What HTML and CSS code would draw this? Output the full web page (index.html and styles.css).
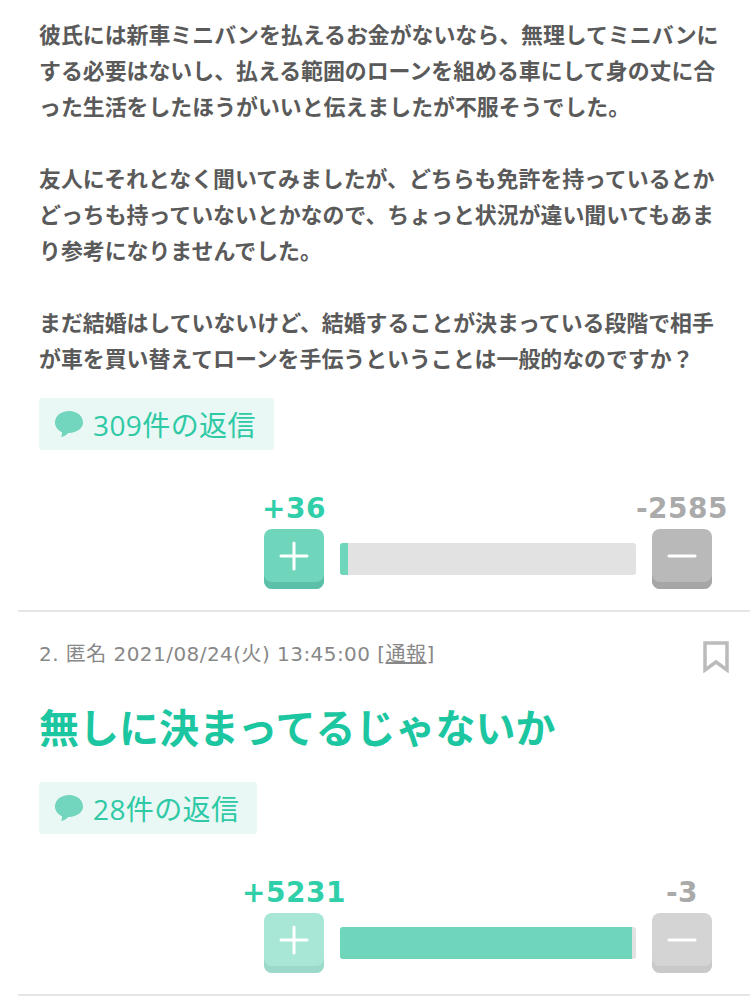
FILE: index.html
```html
<!DOCTYPE html>
<html lang="ja">
<head>
  <meta charset="UTF-8" />
  <title>コメント</title>
  <link rel="stylesheet" href="styles.css">
</head>
<body>

  <!-- Comment 1 -->
  <div class="comment first">
    <p class="body-text">彼氏には新車ミニバンを払えるお金がないなら、無理してミニバンに<br>する必要はないし、払える範囲のローンを組める車にして身の丈に合<br>った生活をしたほうがいいと伝えましたが不服そうでした。<br><br>友人にそれとなく聞いてみましたが、どちらも免許を持っているとか<br>どっちも持っていないとかなので、ちょっと状況が違い聞いてもあま<br>り参考になりませんでした。<br><br>まだ結婚はしていないけど、結婚することが決まっている段階で相手<br>が車を買い替えてローンを手伝うということは一般的なのですか？</p>

    <div class="replies">
      <svg class="bubble" viewBox="0 0 28 28"><path d="M14 1C6 1 0 6 0 12.500c0 4.500 3 8 7 9.700.2 1.600-.2 3.300-1 4.800 2.800-.4 5.400-2 7.200-4.100h.8c8 0 14-4.700 14-10.400C28 6 22 1 14 1z"/></svg>
      <span>309件の返信</span>
    </div>

    <div class="votes">
      <div class="vote-col">
        <div class="count plus">+36</div>
        <div class="btn btn-plus">
          <svg viewBox="0 0 30 30"><path d="M15 2v26M2 15h26"/></svg>
        </div>
      </div>
      <div class="bar"><div class="bar-fill" style="width:8px"></div></div>
      <div class="vote-col">
        <div class="count minus">-2585</div>
        <div class="btn btn-minus">
          <svg viewBox="0 0 30 30"><path d="M2 15h26"/></svg>
        </div>
      </div>
    </div>
  </div>

  <!-- Comment 2 -->
  <div class="comment">
    <div class="meta">
      <span class="meta-text">2. 匿名 2021/08/24(火) 13:45:00 [<u>通報</u>]</span>
      <svg class="bookmark" viewBox="0 0 26 32"><path d="M2 2h22v27l-11-8-11 8z"/></svg>
    </div>
    <p class="title-text">無しに決まってるじゃないか</p>

    <div class="replies">
      <svg class="bubble" viewBox="0 0 28 28"><path d="M14 1C6 1 0 6 0 12.500c0 4.500 3 8 7 9.700.2 1.600-.2 3.300-1 4.800 2.800-.4 5.400-2 7.200-4.100h.8c8 0 14-4.700 14-10.400C28 6 22 1 14 1z"/></svg>
      <span>28件の返信</span>
    </div>

    <div class="votes voted">
      <div class="vote-col">
        <div class="count plus">+5231</div>
        <div class="btn btn-plus">
          <svg viewBox="0 0 30 30"><path d="M15 2v26M2 15h26"/></svg>
        </div>
      </div>
      <div class="bar"><div class="bar-fill" style="width:292px"></div></div>
      <div class="vote-col">
        <div class="count minus">-3</div>
        <div class="btn btn-minus">
          <svg viewBox="0 0 30 30"><path d="M2 15h26"/></svg>
        </div>
      </div>
    </div>
  </div>

</body>
</html>
```

FILE: styles.css
```css
body {
  margin: 0;
  background: #fff;
  font-family: "Noto Sans CJK JP", "Noto Sans", sans-serif;
  color: #5a5a5a;
}
.comment {
  margin-left: 18px;
  padding: 25px 0 21px 21px;
  border-bottom: 2px solid #e6e6e6;
}
.comment.first {
  padding-top: 16px;
}
.body-text {
  margin: 0 0 22px;
  font-size: 21.9px;
  font-weight: 700;
  line-height: 36px;
  white-space: nowrap;
}
.meta {
  display: flex;
  justify-content: space-between;
  align-items: flex-start;
  padding-right: 21px;
  height: 30px;
  font-family: "DejaVu Sans", "Noto Sans CJK JP", sans-serif;
  font-size: 20px;
  letter-spacing: 0.45px;
  line-height: 30px;
  color: #888;
}
.meta-text {
  margin-top: 2px;
}
.bookmark {
  width: 26px;
  height: 32px;
  margin-top: 4px;
  fill: none;
  stroke: #bbb;
  stroke-width: 3.5;
}
.title-text {
  margin: 29px 0 26px;
  font-size: 40px;
  font-weight: 700;
  line-height: 60px;
  color: #1cc6a0;
}
.replies {
  display: inline-flex;
  align-items: center;
  gap: 10px;
  height: 52px;
  padding: 0 18px 0 16px;
  border-radius: 3px;
  background: #e9f8f5;
  font-family: "Open Sans", "Noto Sans CJK JP", sans-serif;
  font-size: 28px;
  letter-spacing: 0.4px;
  color: #2fc9a5;
  vertical-align: top;
}
.bubble {
  width: 28px;
  height: 28px;
  fill: #72d5bd;
}
.votes {
  display: grid;
  grid-template-columns: 60px 296px 60px;
  column-gap: 16px;
  justify-content: end;
  align-items: end;
  margin-top: 42px;
  padding-right: 38px;
}
.vote-col {
  display: flex;
  flex-direction: column;
  align-items: center;
}
.count {
  font-family: "DejaVu Sans", sans-serif;
  font-size: 28px;
  font-weight: 700;
  letter-spacing: 0.5px;
  line-height: 34px;
  margin-bottom: 3px;
  white-space: nowrap;
}
.count.plus {
  color: #2fcfa9;
}
.count.minus {
  color: #aaa;
}
.btn {
  display: flex;
  align-items: center;
  justify-content: center;
  box-sizing: border-box;
  width: 60px;
  height: 60px;
  padding-bottom: 6px;
  border-radius: 8px;
}
.btn svg {
  width: 30px;
  height: 30px;
  fill: none;
  stroke: #fff;
  stroke-width: 3;
  stroke-linecap: round;
}
.btn-plus {
  background: #6fd6bc;
  box-shadow: inset 0 -7px 0 #5cc0a8;
}
.btn-minus {
  background: #b9b9b9;
  box-shadow: inset 0 -7px 0 #a6a6a6;
}
.voted .btn {
  opacity: 0.6;
}
.bar {
  height: 32px;
  margin-bottom: 14px;
  border-radius: 3px;
  background: #e2e2e2;
  overflow: hidden;
}
.bar-fill {
  height: 100%;
  background: #6fd6bc;
}
```
